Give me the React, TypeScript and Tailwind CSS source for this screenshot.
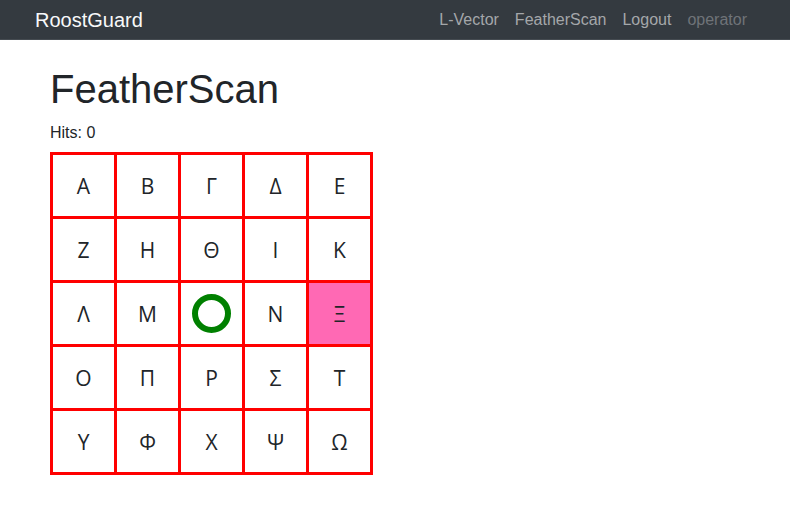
const letters = [
  'Α', 'Β', 'Γ', 'Δ', 'Ε',
  'Ζ', 'Η', 'Θ', 'Ι', 'Κ',
  'Λ', 'Μ', '', 'Ν', 'Ξ',
  'Ο', 'Π', 'Ρ', 'Σ', 'Τ',
  'Υ', 'Φ', 'Χ', 'Ψ', 'Ω',
];

const Navbar = () => (
  <nav className="h-[40px] bg-[#343a40] border-b border-[#454b51] flex items-center pl-[35px] pr-[43px]">
    <a href="#" className="text-[20px] text-[#f8f9fa]">RoostGuard</a>
    <div className="ml-auto flex items-center gap-4 text-[16px]">
      <a href="#" className="text-[#a4a7aa]">L-Vector</a>
      <a href="#" className="text-[#a4a7aa]">FeatherScan</a>
      <a href="#" className="text-[#a4a7aa]">Logout</a>
      <span className="text-[#6f7378]">operator</span>
    </div>
  </nav>
);

const Board = () => (
  <div className="grid grid-cols-5 gap-[3px] p-[3px] bg-[#ff0000] w-[323px]">
    {letters.map((ch, i) => (
      <div
        key={i}
        className={
          'h-[61px] flex items-center justify-center pt-[2px] text-[21px] text-[#212529] font-["Open_Sans",sans-serif] ' +
          (i === 14 ? 'bg-[#ff69b4]' : 'bg-white')
        }
      >
        {i === 12 ? (
          <div className="w-[39px] h-[39px] -mt-[2px] rounded-full border-[6px] border-[#008000]" />
        ) : (
          ch
        )}
      </div>
    ))}
  </div>
);

export default function App() {
  return (
    <div className="min-h-[509px] bg-white font-['Liberation_Sans',Arial,sans-serif] text-[#212529]">
      <Navbar />
      <main className="px-[50px] pt-[25px]">
        <h1 className="text-[40px] leading-[48px] font-medium mb-2">FeatherScan</h1>
        <p className="text-[16px] leading-[24px] mb-[7px]">Hits: 0</p>
        <Board />
      </main>
    </div>
  );
}
